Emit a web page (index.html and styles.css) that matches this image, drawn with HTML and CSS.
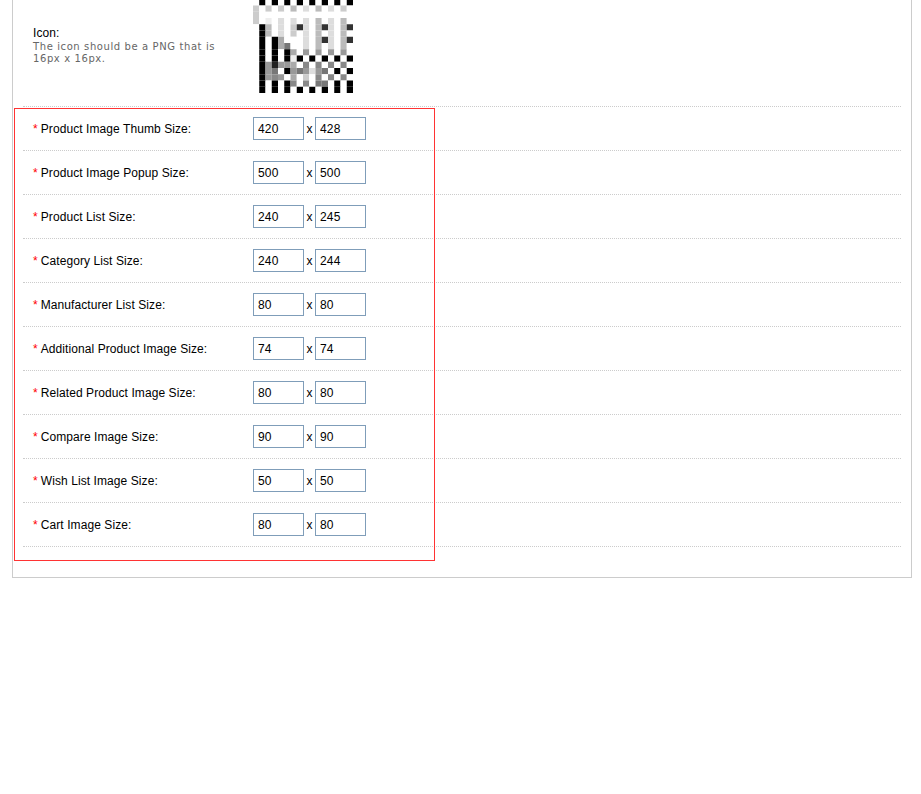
FILE: index.html
```
<!DOCTYPE html>
<html lang="en">
<head>
<meta charset="utf-8">
<title>Image settings</title>
<link rel="stylesheet" href="styles.css">
</head>
<body>
<main class="content">
<div class="form">
<div class="row icon-row">
<div class="label">Icon:<span class="help">The icon should be a PNG that is<br>16px x 16px.</span></div>
<svg class="icon" id="icon" viewBox="0 0 16 16" width="100" height="100"></svg>
</div>
<div id="sizes"></div>
</div>
<div class="highlight"></div>
</main>
<script src="script.js"></script>
</body>
</html>
```
FILE: styles.css
```
body {
  margin: 0;
  background: #fff;
  color: #000;
  font: 12px/15px "Liberation Sans", Arial, sans-serif;
}
.content {
  position: relative;
  box-sizing: border-box;
  width: 900px;
  height: 578px;
  margin-left: 12px;
  padding: 0 10px;
  border: 1px solid #ccc;
  border-top: 0;
  overflow: hidden;
}
.row {
  box-sizing: border-box;
  display: flex;
  align-items: center;
  width: 878px;
  height: 44px;
  padding: 0 10px;
  border-bottom: 1px dotted #ccc;
}
.icon-row {
  height: 107px;
  align-items: flex-start;
}
.label {
  width: 220px;
  flex: none;
  padding-top: 2px;
  white-space: nowrap;
  letter-spacing: 0.08px;
}
.icon-row .label { padding-top: 26px; }
.help {
  display: block;
  color: #666;
  font: 10px/12px "DejaVu Sans", Verdana, sans-serif;
  letter-spacing: 0.6px;
}
.icon { margin-top: -7px; }
.required { color: #f00; margin-right: 3px; }
.size {
  box-sizing: border-box;
  width: 51px;
  height: 23px;
  margin: 0;
  padding: 0 4px;
  border: 1px solid #7f9db9;
  border-radius: 0;
  background: #fff;
  color: #000;
  font: 12px "Liberation Sans", Arial, sans-serif;
  letter-spacing: 0.2px;
}
.times {
  width: 11px;
  padding-top: 2px;
  text-align: center;
}
.highlight {
  position: absolute;
  left: 1px;
  top: 108px;
  box-sizing: border-box;
  width: 421px;
  height: 453px;
  border: 1px solid #f33;
  pointer-events: none;
}
```
FILE: script.js
```
const sizes = [
  ["Product Image Thumb Size:", 420, 428],
  ["Product Image Popup Size:", 500, 500],
  ["Product List Size:", 240, 245],
  ["Category List Size:", 240, 244],
  ["Manufacturer List Size:", 80, 80],
  ["Additional Product Image Size:", 74, 74],
  ["Related Product Image Size:", 80, 80],
  ["Compare Image Size:", 90, 90],
  ["Wish List Image Size:", 50, 50],
  ["Cart Image Size:", 80, 80]
];
document.getElementById("sizes").innerHTML = sizes.map(([name, w, h]) =>
  `<div class="row"><div class="label"><span class="required">*</span><span>${name}</span></div>` +
  `<input class="size" type="text" value="${w}"><span class="times">x</span><input class="size" type="text" value="${h}"></div>`
).join("");

// One hex digit of grey for each pixel.
const pixels = [
  "ffffffffffffffff",
  "f0f0f0f0f0f0f0f0",
  "cfcfcfbfdfbfdfcf",
  "cfffffffffffffff",
  "cfefdfdfdfbfdfbf",
  "f0bfdfc3dfb3dfb3",
  "f0bfdfcfdfbfdfbf",
  "f0f0afffdfb3dfb3",
  "f0f0a7ffdfbfdfbf",
  "f0f0f0af9f9f9f9f",
  "f0f0f0e0f0f0f0f0",
  "f09299af8f8f8f8f",
  "f097f0979d97f0f0",
  "f0989fafcf8f8f8f",
  "f0f0f08f8f77f0f0",
  "f0f0f0f0f0f0f0f0"
];
document.getElementById("icon").innerHTML = pixels.map((line, y) =>
  [...line].map((g, x) => `<rect x="${x}" y="${y}" width="1" height="1" fill="#${g.repeat(3)}"/>`).join("")
).join("");
```
